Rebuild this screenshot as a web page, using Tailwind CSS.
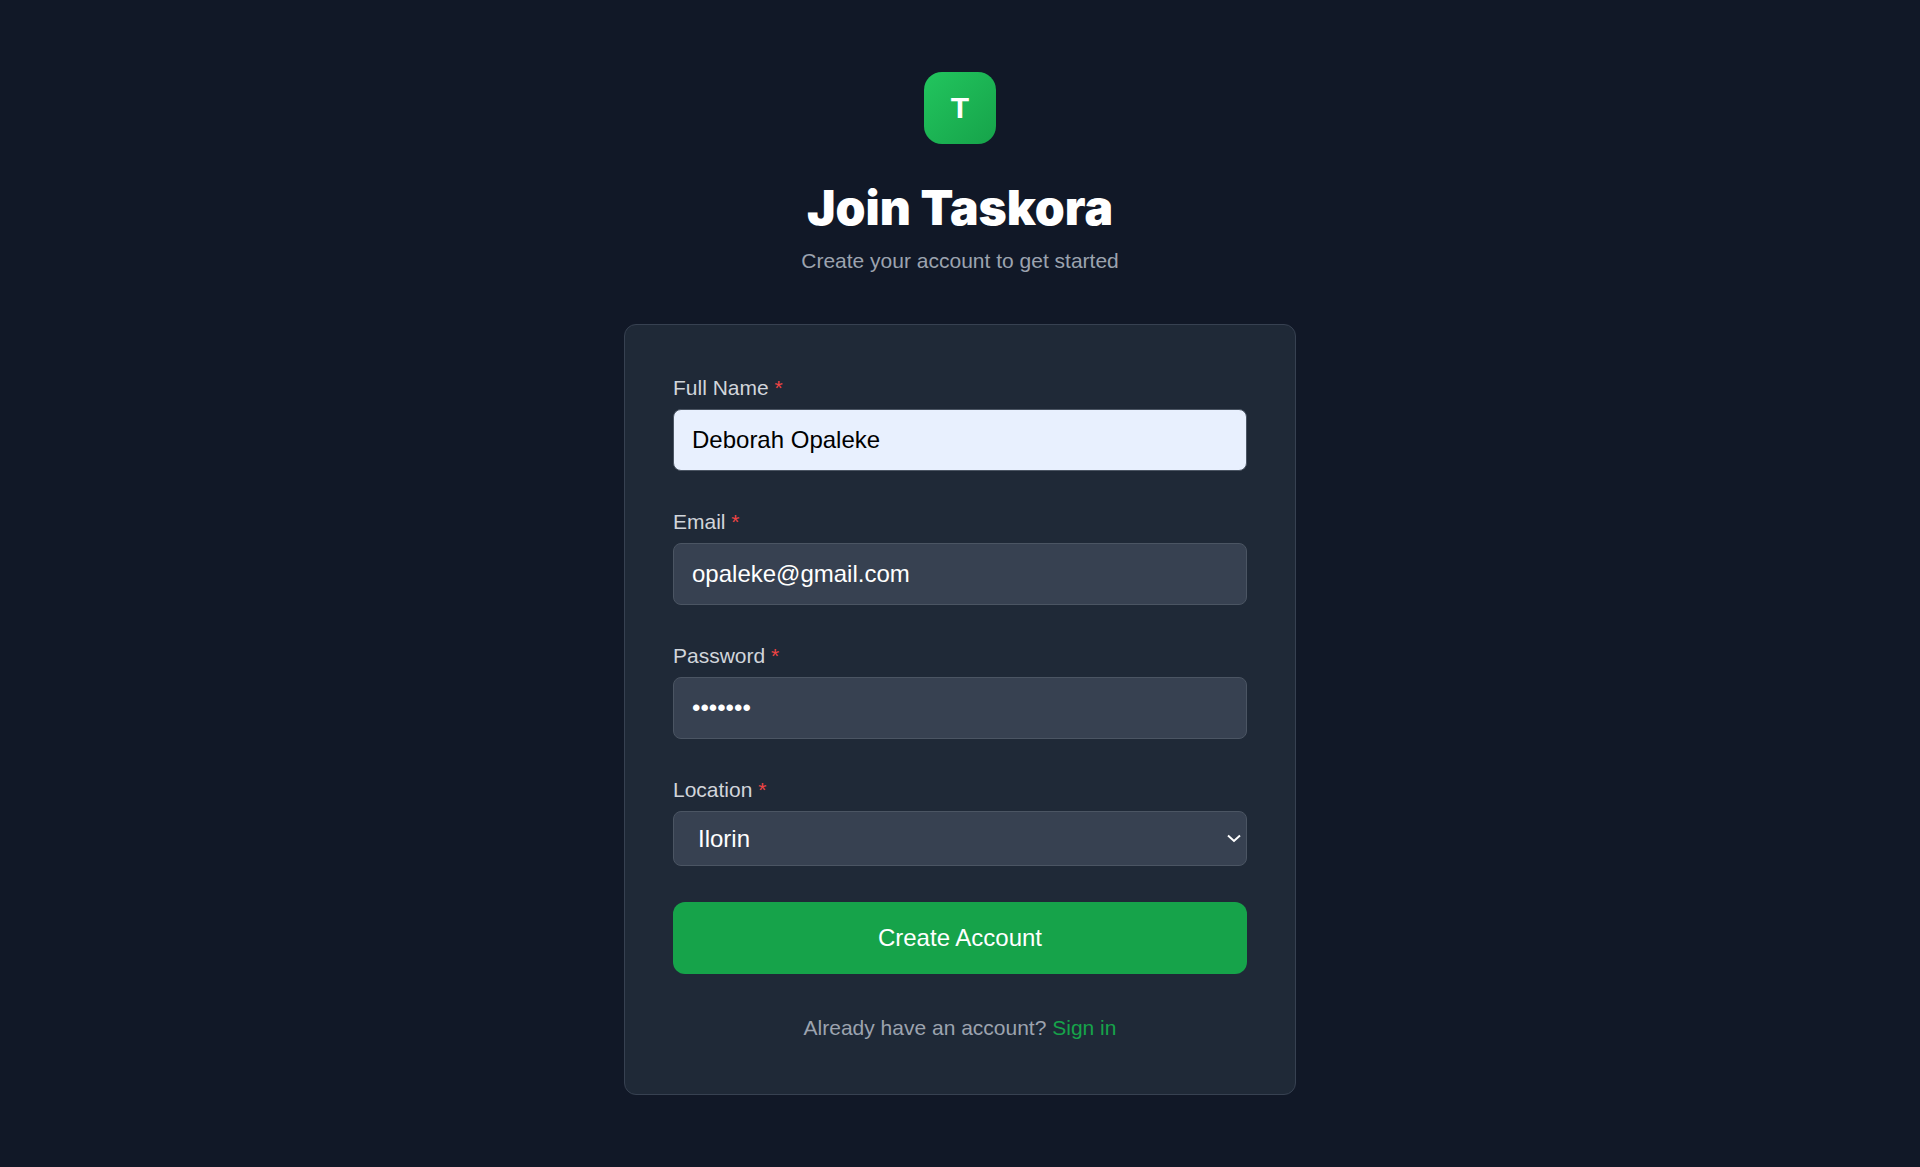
<!DOCTYPE html>
<html lang="en">
<head>
<meta charset="utf-8">
<meta name="viewport" content="width=device-width, initial-scale=1">
<title>Join Taskora</title>
<script src="https://cdn.jsdelivr.net/npm/@tailwindcss/browser@4"></script>
</head>
<body class="min-h-screen bg-[#111827] font-['Liberation_Sans',Arial,sans-serif] text-[21px] leading-[30px] text-white">
<main class="mx-auto flex w-full max-w-[672px] flex-col py-[72px]">
  <header class="mb-12 flex flex-col items-center text-center">
    <div class="mb-9 flex size-[72px] items-center justify-center rounded-[18px] bg-linear-to-br from-[#22c55e] to-[#16a34a] text-[30px] font-bold">T</div>
    <h1 class="mb-2.5 font-[Inter,sans-serif] text-5xl leading-14 font-black">Join Taskora</h1>
    <p class="text-[#9ca3af]">Create your account to get started</p>
  </header>

  <form class="flex flex-col gap-9 rounded-xl border border-[#374151] bg-[#1f2937] p-12">
    <div class="flex flex-col gap-1.5">
      <label for="name" class="text-[#d1d5db]">Full Name <span class="text-[#ef4444]">*</span></label>
      <input id="name" type="text" value="Deborah Opaleke" class="w-full rounded-lg border border-[#4b5563] bg-[#e8f0fe] px-[18px] py-3 text-2xl leading-9 text-black outline-none">
    </div>
    <div class="flex flex-col gap-1.5">
      <label for="email" class="text-[#d1d5db]">Email <span class="text-[#ef4444]">*</span></label>
      <input id="email" type="email" value="opaleke@gmail.com" class="w-full rounded-lg border border-[#4b5563] bg-[#374151] px-[18px] py-3 text-2xl leading-9 text-white outline-none">
    </div>
    <div class="flex flex-col gap-1.5">
      <label for="password" class="text-[#d1d5db]">Password <span class="text-[#ef4444]">*</span></label>
      <input id="password" type="password" value="taskora" class="w-full rounded-lg border border-[#4b5563] bg-[#374151] px-[18px] py-3 text-2xl leading-9 text-white outline-none">
    </div>
    <div class="flex flex-col gap-1.5">
      <label for="location" class="text-[#d1d5db]">Location <span class="text-[#ef4444]">*</span></label>
      <div class="relative">
        <select id="location" class="block h-[55px] w-full appearance-none rounded-lg border border-[#4b5563] bg-[#374151] px-6 text-2xl text-white outline-none">
          <option>Ilorin</option>
        </select>
        <svg class="pointer-events-none absolute top-1/2 right-1.5 h-2.5 w-3.5 -translate-y-1/2" viewBox="0 0 14 10" fill="none" stroke="currentColor" stroke-width="2" aria-hidden="true"><path d="M1 1.5l6 5.5 6-5.5"/></svg>
      </div>
    </div>
    <button type="submit" class="h-[72px] rounded-xl bg-[#16a34a] text-2xl text-white">Create Account</button>
    <p class="text-center leading-9 text-[#9ca3af]">Already have an account? <a href="#" class="text-[#16a34a]">Sign in</a></p>
  </form>
</main>
</body>
</html>
